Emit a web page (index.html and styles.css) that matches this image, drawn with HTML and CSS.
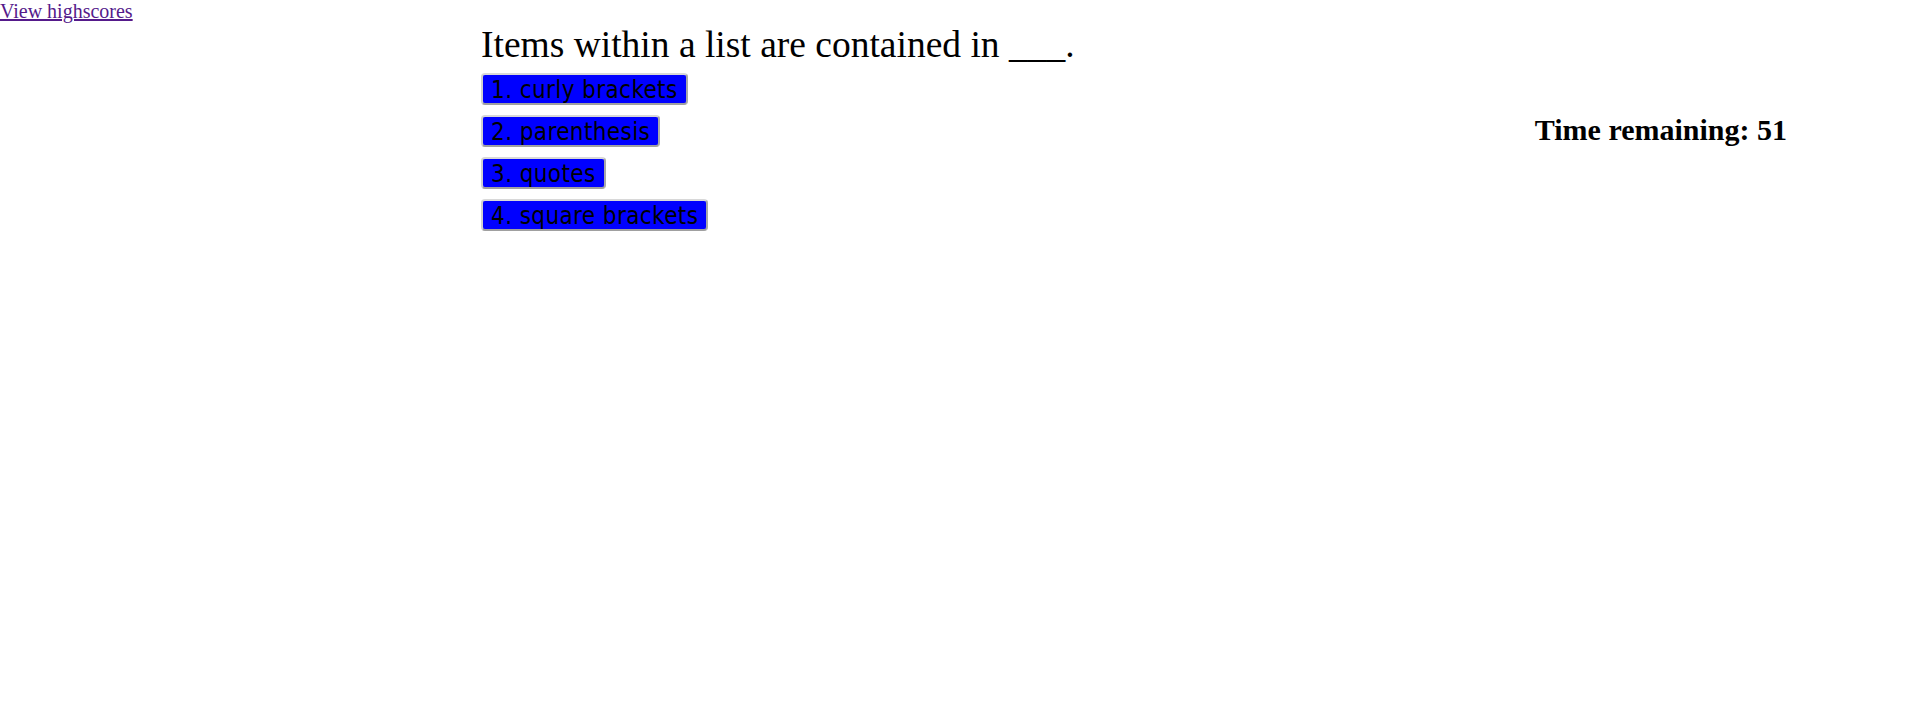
FILE: index.html
```html
<!DOCTYPE html>
<html>
<head>
<meta charset="utf-8">
<link rel="stylesheet" href="styles.css">
</head>
<body>
<a class="scores-link" href="#">View highscores</a>
<main class="quiz">
  <section class="question">
    <h1 class="question-title">Items within a list are contained in ___.</h1>
    <div class="choices">
      <button class="choice">1. curly brackets</button>
      <button class="choice">2. parenthesis</button>
      <button class="choice">3. quotes</button>
      <button class="choice">4. square brackets</button>
    </div>
  </section>
  <h2 class="timer">Time remaining: 51</h2>
</main>
</body>
</html>
```
FILE: styles.css
```css
html, body {
  margin: 0;
  padding: 0;
  background: #ffffff;
}
body {
  font-family: "Liberation Serif", "Times New Roman", serif;
  font-size: 20px;
  color: #000;
}
.scores-link {
  display: block;
  width: max-content;
  color: #551a8b;
  text-decoration: underline;
  font-size: 20px;
  line-height: 23px;
}
.quiz {
  display: flex;
  align-items: flex-start;
  justify-content: space-between;
  padding: 0 120px 0 481px;
}
.question {
  display: flex;
  flex-direction: column;
}
.question-title {
  margin: 0;
  font-size: 37.5px;
  font-weight: normal;
  line-height: 44px;
}
.choices {
  display: flex;
  flex-direction: column;
  align-items: flex-start;
  gap: 10px;
  margin-top: 6px;
}
.choice {
  font-family: "DejaVu Sans Condensed", "DejaVu Sans", Tahoma, sans-serif;
  font-stretch: condensed;
  font-size: 24px;
  letter-spacing: 0.4px;
  line-height: 26px;
  color: #000;
  background: #0000ff;
  padding: 2px 8px 0 8px;
  border: 2px solid;
  border-color: #d8d8d8 #a8a8a8 #a0a0a0 #d0d0d0;
  border-radius: 4px;
  cursor: pointer;
}
.timer {
  margin: 89px 0 0 0;
  font-size: 30px;
  font-weight: bold;
  line-height: 35px;
}
```
